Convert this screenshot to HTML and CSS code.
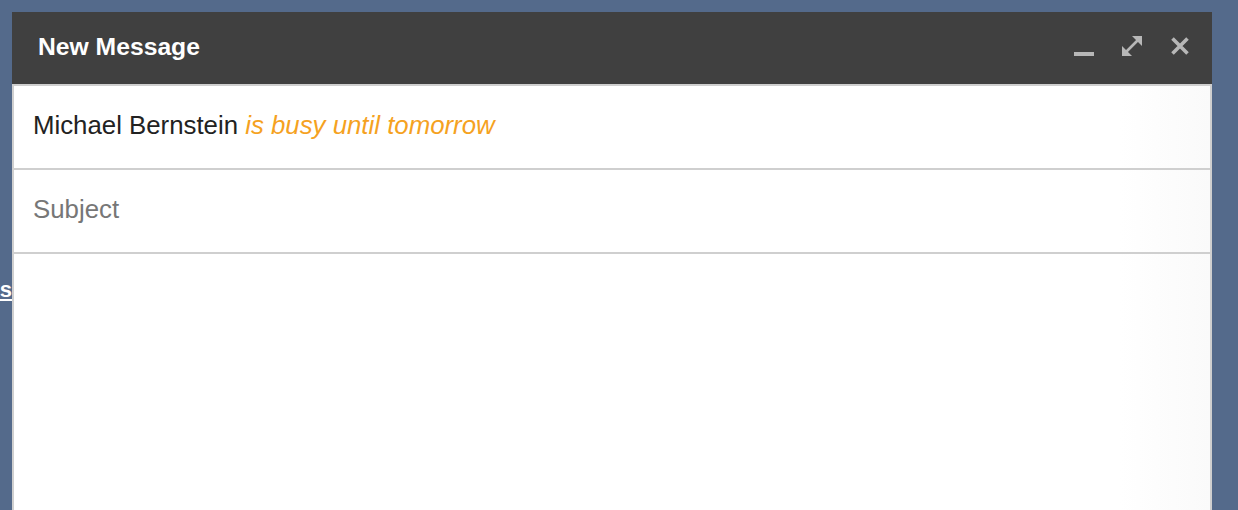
FILE: index.html
```html
<!DOCTYPE html>
<html>
<head>
<meta charset="utf-8">
<link rel="stylesheet" href="styles.css">
</head>
<body>
<div class="page">
  <a class="bg-link" href="#">Contacts</a>
  <div class="compose">
    <div class="compose-header">
      <div class="compose-title">New Message</div>
      <div class="compose-actions">
        <svg class="icon" width="20" height="20" viewBox="0 0 20 20"><rect x="0" y="16" width="20" height="4" fill="#b7b7b7"/></svg>
        <svg class="icon" width="20" height="20" viewBox="0 0 20 20">
          <path d="M4 16 L16 4" stroke="#b7b7b7" stroke-width="2.6"/>
          <polygon points="10,0 20,0 20,10" fill="#b7b7b7"/>
          <polygon points="0,10 0,20 10,20" fill="#b7b7b7"/>
        </svg>
        <svg class="icon" width="20" height="20" viewBox="0 0 20 20">
          <path d="M2.5 2.5 L17.5 17.5 M17.5 2.5 L2.5 17.5" stroke="#b7b7b7" stroke-width="3.6"/>
        </svg>
      </div>
    </div>
    <div class="compose-body">
      <div class="row">
        <span class="field"><span class="recipient">Michael Bernstein</span> <span class="status">is busy until tomorrow</span></span>
      </div>
      <div class="row">
        <span class="field placeholder">Subject</span>
      </div>
      <div class="message"></div>
    </div>
  </div>
</div>
</body>
</html>
```

FILE: styles.css
```css
html, body {
  margin: 0;
  padding: 0;
  height: 100%;
  overflow: hidden;
}
body {
  background: #546a8b;
  font-family: "Liberation Sans", Arial, Helvetica, sans-serif;
}
.page {
  position: relative;
  padding: 12px 0 0 12px;
  height: 100%;
  box-sizing: border-box;
}
.bg-link {
  position: absolute;
  right: calc(100% - 12px);
  top: 277px;
  color: #ffffff;
  font-weight: bold;
  font-size: 22px;
  text-decoration: underline;
  white-space: nowrap;
}
.compose {
  position: relative;
  width: 1200px;
  display: flex;
  flex-direction: column;
  height: 520px;
}
.compose-header {
  height: 72px;
  background: #404040;
  display: flex;
  align-items: center;
  justify-content: space-between;
  padding: 0 22px 0 26px;
  flex-shrink: 0;
}
.compose-title {
  color: #ffffff;
  font-size: 24.7px;
  font-weight: bold;
  margin-top: -3px;
}
.compose-actions {
  display: flex;
  gap: 28px;
  margin-top: -4px;
}
.icon {
  display: block;
}
.compose-body {
  flex: 1;
  border: 2px solid #cfcfcf;
  border-bottom: none;
  background: linear-gradient(to right, #ffffff calc(100% - 90px), #fafafa);
  display: flex;
  flex-direction: column;
}
.row {
  height: 82px;
  box-sizing: content-box;
  border-bottom: 2px solid #cfcfcf;
  display: flex;
  align-items: center;
  padding: 0 19px;
  font-size: 25.8px;
  flex-shrink: 0;
}
.field {
  white-space: pre;
  margin-bottom: 4px;
}
.recipient {
  color: #222222;
}
.status {
  color: #f5a21f;
  font-style: italic;
}
.placeholder {
  color: #777777;
}
.message {
  flex: 1;
}
```
